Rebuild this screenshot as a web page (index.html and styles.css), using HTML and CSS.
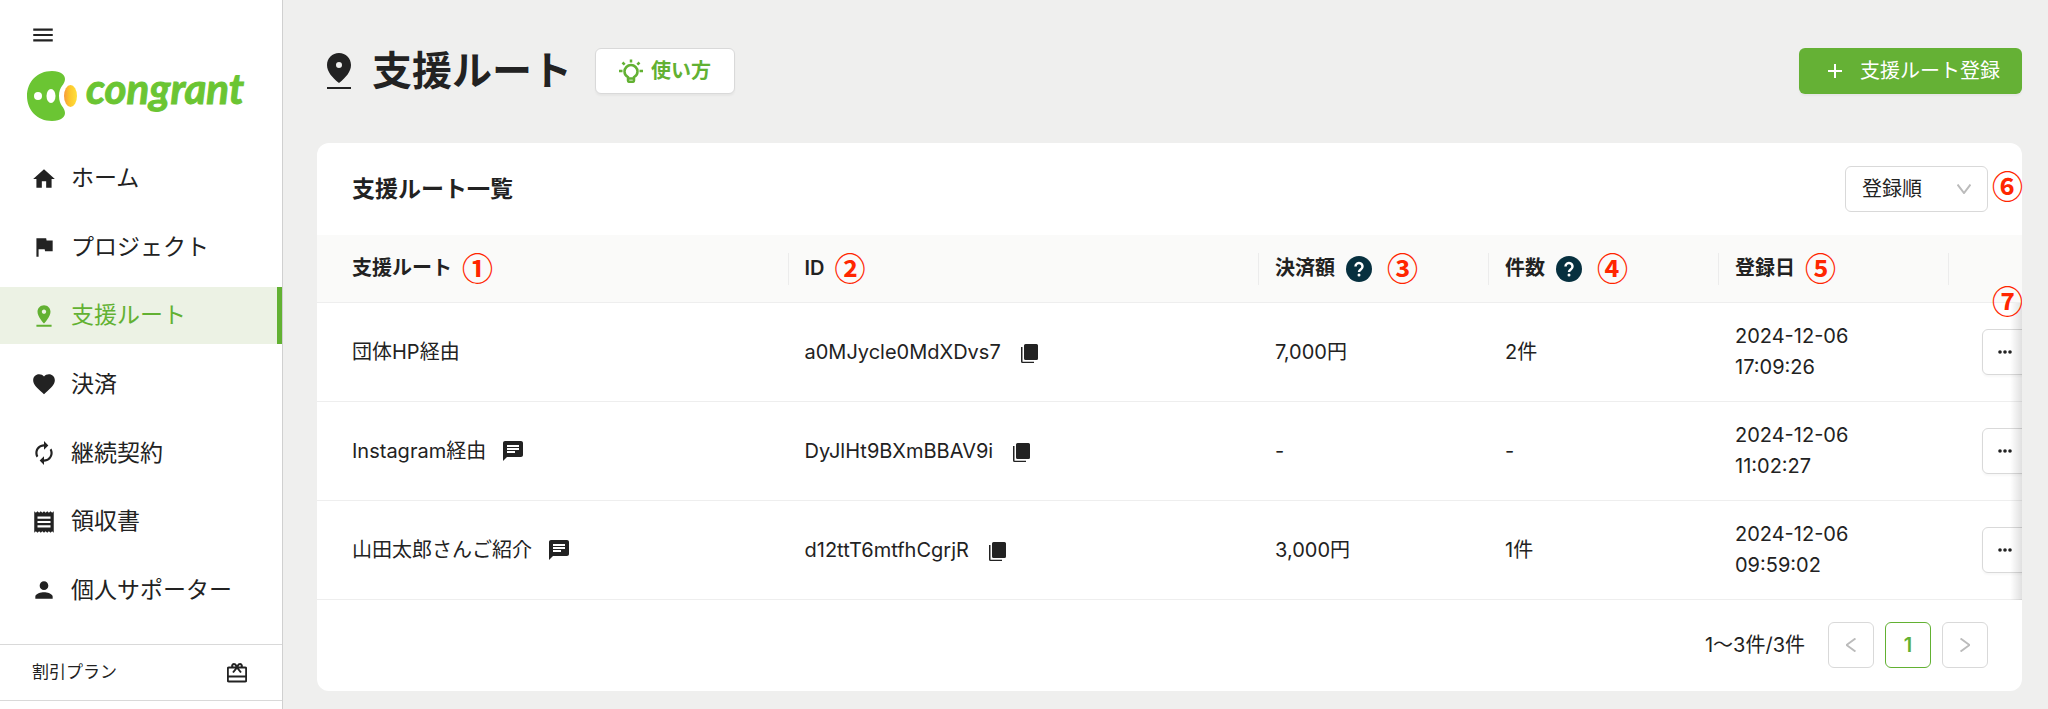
FILE: index.html
```html
<!DOCTYPE html>
<html lang="ja">
<head>
    <meta charset="UTF-8">
    <meta name="viewport" content="width=device-width, initial-scale=1.0">
    <title>支援ルート | congrant</title>
    <link rel="stylesheet" href="styles.css">
</head>
<body>
    <div class="layout">
        <aside class="sidebar">
            <button type="button" class="menu-btn" aria-label="メニュー">
                <svg class="icon" viewBox="0 0 24 24"><path d="M3 18h18v-2H3v2zm0-5h18v-2H3v2zm0-7v2h18V6H3z"/></svg>
            </button>
            <a href="#" class="logo">
                <svg class="logo-mark" viewBox="0 0 50 50">
                    <defs>
                        <linearGradient id="coin">
                            <stop offset="0" stop-color="#f79a3c"/>
                            <stop offset="0.4" stop-color="#fcc42c"/>
                            <stop offset="1" stop-color="#ffe03a"/>
                        </linearGradient>
                    </defs>
                    <path fill="#6bc533" d="M25 0C34 0 38 4 38 8C38 14 32 15 32 25C32 35 38 36 38 42C38 46 34 50 25 50C10 50 0 39 0 25C0 11 10 0 25 0Z"/>
                    <circle cx="11" cy="25" r="4" fill="#fff"/>
                    <ellipse cx="24" cy="25" rx="4.500" ry="7" fill="#fff"/>
                    <ellipse cx="43.500" cy="25" rx="6.500" ry="11" fill="url(#coin)"/>
                </svg>
                <span class="logo-text">congrant</span>
            </a>

            <nav class="nav">
                <a href="#" class="nav-item">
                    <svg class="icon" viewBox="0 0 24 24"><path d="M10 20v-6h4v6h5v-8h3L12 3 2 12h3v8z"/></svg>
                    ホーム
                </a>
                <a href="#" class="nav-item">
                    <svg class="icon" viewBox="0 0 24 24"><path d="M14.400 6L14 4H5v17h2v-7h5.600l.4 2h7V6z"/></svg>
                    プロジェクト
                </a>
                <a href="#" class="nav-item active">
                    <svg class="icon" viewBox="0 0 24 24"><path d="M18 8c0-3.310-2.690-6-6-6S6 4.690 6 8c0 4.500 6 11 6 11s6-6.500 6-11zm-8 0c0-1.100.9-2 2-2s2 .9 2 2-.89 2-2 2c-1.100 0-2-.9-2-2zM5 20v2h14v-2H5z"/></svg>
                    支援ルート
                </a>
                <a href="#" class="nav-item">
                    <svg class="icon" viewBox="0 0 24 24"><path d="M12 21.350l-1.450-1.320C5.400 15.360 2 12.280 2 8.500 2 5.420 4.420 3 7.500 3c1.740 0 3.410.81 4.500 2.090C13.090 3.810 14.760 3 16.500 3 19.580 3 22 5.420 22 8.500c0 3.780-3.400 6.860-8.550 11.540L12 21.350z"/></svg>
                    決済
                </a>
                <a href="#" class="nav-item">
                    <svg class="icon" viewBox="0 0 24 24"><path d="M12 6v3l4-4-4-4v3c-4.420 0-8 3.580-8 8 0 1.570.46 3.030 1.240 4.260L6.700 14.800c-.45-.83-.7-1.790-.7-2.800 0-3.310 2.690-6 6-6zm6.760 1.740L17.300 9.200c.44.840.7 1.790.7 2.800 0 3.310-2.690 6-6 6v-3l-4 4 4 4v-3c4.420 0 8-3.580 8-8 0-1.570-.46-3.030-1.240-4.260z"/></svg>
                    継続契約
                </a>
                <a href="#" class="nav-item">
                    <svg class="icon" viewBox="0 0 24 24"><path d="M18 17H6v-2h12v2zm0-4H6v-2h12v2zm0-4H6V7h12v2zM3 22l1.500-1.500L6 22l1.500-1.500L9 22l1.500-1.500L12 22l1.500-1.500L15 22l1.500-1.500L18 22l1.500-1.500L21 22V2l-1.500 1.500L18 2l-1.500 1.500L15 2l-1.500 1.500L12 2l-1.500 1.500L9 2 7.500 3.500 6 2 4.500 3.500 3 2v20z"/></svg>
                    領収書
                </a>
                <a href="#" class="nav-item">
                    <svg class="icon" viewBox="0 0 24 24"><path d="M12 12c2.210 0 4-1.790 4-4s-1.790-4-4-4-4 1.790-4 4 1.790 4 4 4zm0 2c-2.670 0-8 1.340-8 4v2h16v-2c0-2.660-5.330-4-8-4z"/></svg>
                    個人サポーター
                </a>
            </nav>

            <a href="#" class="plan-link">
                割引プラン
                <svg class="plan-icon" viewBox="0 0 20 20"><path d="M2 4.500h16q1.200 0 1.200 1.200v11.600q0 1.200-1.200 1.200H2q-1.200 0-1.200-1.200V5.700Q.800 4.500 2 4.500zM1 13.500h18M10 4.500L6 9.500M10 4.500l4 5M10 4.500C9 2 8.500 1 7.200 1a1.900 1.900 0 0 0-1.400 3.300M10 4.500C11 2 11.500 1 12.800 1a1.900 1.900 0 0 1 1.400 3.300"/></svg>
            </a>
        </aside>

        <main class="main">
            <header class="page-header">
                <svg class="title-icon" viewBox="0 0 24 36"><path d="M12 0C5.200 0 0 5 0 12c0 6.500 5 12.500 12 18 7-5.500 12-11.500 12-18C24 5 18.800 0 12 0zm0 9a3 3 0 1 1 0 6 3 3 0 0 1 0-6zM0 34h24v2H0z"/></svg>
                <h1>支援ルート</h1>
                <button type="button" class="btn help-btn">
                    <svg class="bulb-icon" viewBox="0 0 24 24">
                        <path d="M9 18.200c-2.200-1-3.500-3.100-3.500-5.600a6.500 6.500 0 0 1 13 0c0 2.500-1.300 4.600-3.500 5.600v3.300q0 1.300-1.300 1.300h-3.400Q9 22.800 9 21.500zM9 19.500h6M12 .5v3M0 12h3.500M20.500 12H24M3.500 3.500l2.200 2.200M20.500 3.500l-2.200 2.200"/>
                    </svg>
                    使い方
                </button>
                <button type="button" class="btn add-btn">
                    <svg class="plus-icon" viewBox="0 0 14 14"><path d="M7 0v14M0 7h14"/></svg>
                    支援ルート登録
                </button>
            </header>

            <section class="card">
                <div class="card-header">
                    <h2>支援ルート一覧</h2>
                    <div class="sort">
                        <select class="sort-select" aria-label="並び順">
                            <option>登録順</option>
                        </select>
                        <svg class="sort-arrow" viewBox="0 0 14 10"><path d="M.5.500L7 9 13.500.500"/></svg>
                        <span class="mark mark-sort">⑥</span>
                    </div>
                </div>

                <div class="table-wrap">
                    <table class="route-table">
                        <colgroup>
                            <col>
                            <col>
                            <col class="col-data">
                            <col class="col-data">
                            <col class="col-data">
                            <col class="col-action">
                        </colgroup>
                        <thead>
                            <tr>
                                <th><div class="th-cell">支援ルート<span class="mark">①</span></div></th>
                                <th><div class="th-cell">ID<span class="mark">②</span></div></th>
                                <th><div class="th-cell">決済額<button type="button" class="tip" aria-label="決済額の説明"><svg viewBox="0 0 26 26"><path d="M9.500 10.500a3.500 3.500 0 1 1 5.500 2.800c-1.300 1-2 1.400-2 2.700"/><circle cx="13" cy="19" r="1.500"/></svg></button><span class="mark">③</span></div></th>
                                <th><div class="th-cell">件数<button type="button" class="tip" aria-label="件数の説明"><svg viewBox="0 0 26 26"><path d="M9.500 10.500a3.500 3.500 0 1 1 5.500 2.800c-1.300 1-2 1.400-2 2.700"/><circle cx="13" cy="19" r="1.500"/></svg></button><span class="mark">④</span></div></th>
                                <th><div class="th-cell">登録日<span class="mark">⑤</span></div></th>
                                <th><span class="mark mark-action">⑦</span></th>
                            </tr>
                        </thead>
                        <tbody>
                            <tr>
                                <td>団体HP経由</td>
                                <td>
                                    <div class="id-cell">a0MJycle0MdXDvs7
                                        <button type="button" class="icon-btn" aria-label="コピー"><svg class="copy-icon" viewBox="0 0 17 20"><path d="M4.500 0h11Q17 0 17 1.500v13Q17 16 15.500 16h-11Q3 16 3 14.500v-13Q3 0 4.500 0zM0 3h1.500v14.800H13V19H1.500Q0 19 0 17.500z"/></svg></button>
                                    </div>
                                </td>
                                <td>7,000円</td>
                                <td>2件</td>
                                <td>2024-12-06<br>17:09:26</td>
                                <td><button type="button" class="more-btn" aria-label="操作"><svg viewBox="0 0 14 4"><circle cx="2" cy="2" r="1.800"/><circle cx="7" cy="2" r="1.800"/><circle cx="12" cy="2" r="1.800"/></svg></button></td>
                            </tr>
                            <tr>
                                <td>
                                    <div class="name-cell">Instagram経由
                                        <button type="button" class="icon-btn" aria-label="メモ"><svg class="memo-icon" viewBox="2 2 20 20"><path d="M20 2H4c-1.100 0-1.990.9-1.990 2L2 22l4-4h14c1.100 0 2-.9 2-2V4c0-1.100-.9-2-2-2zM6 9h12v2H6V9zm8 5H6v-2h8v2zm4-6H6V6h12v2z"/></svg></button>
                                    </div>
                                </td>
                                <td>
                                    <div class="id-cell">DyJlHt9BXmBBAV9i
                                        <button type="button" class="icon-btn" aria-label="コピー"><svg class="copy-icon" viewBox="0 0 17 20"><path d="M4.500 0h11Q17 0 17 1.500v13Q17 16 15.500 16h-11Q3 16 3 14.500v-13Q3 0 4.500 0zM0 3h1.500v14.800H13V19H1.500Q0 19 0 17.500z"/></svg></button>
                                    </div>
                                </td>
                                <td>-</td>
                                <td>-</td>
                                <td>2024-12-06<br>11:02:27</td>
                                <td><button type="button" class="more-btn" aria-label="操作"><svg viewBox="0 0 14 4"><circle cx="2" cy="2" r="1.800"/><circle cx="7" cy="2" r="1.800"/><circle cx="12" cy="2" r="1.800"/></svg></button></td>
                            </tr>
                            <tr>
                                <td>
                                    <div class="name-cell">山田太郎さんご紹介
                                        <button type="button" class="icon-btn" aria-label="メモ"><svg class="memo-icon" viewBox="2 2 20 20"><path d="M20 2H4c-1.100 0-1.990.9-1.990 2L2 22l4-4h14c1.100 0 2-.9 2-2V4c0-1.100-.9-2-2-2zM6 9h12v2H6V9zm8 5H6v-2h8v2zm4-6H6V6h12v2z"/></svg></button>
                                    </div>
                                </td>
                                <td>
                                    <div class="id-cell">d12ttT6mtfhCgrjR
                                        <button type="button" class="icon-btn" aria-label="コピー"><svg class="copy-icon" viewBox="0 0 17 20"><path d="M4.500 0h11Q17 0 17 1.500v13Q17 16 15.500 16h-11Q3 16 3 14.500v-13Q3 0 4.500 0zM0 3h1.500v14.800H13V19H1.500Q0 19 0 17.500z"/></svg></button>
                                    </div>
                                </td>
                                <td>3,000円</td>
                                <td>1件</td>
                                <td>2024-12-06<br>09:59:02</td>
                                <td><button type="button" class="more-btn" aria-label="操作"><svg viewBox="0 0 14 4"><circle cx="2" cy="2" r="1.800"/><circle cx="7" cy="2" r="1.800"/><circle cx="12" cy="2" r="1.800"/></svg></button></td>
                            </tr>
                        </tbody>
                    </table>
                </div>

                <div class="pagination">
                    <span class="total">1〜3件/3件</span>
                    <button type="button" class="page-btn" aria-label="前へ" disabled><svg viewBox="0 0 10 14"><path d="M9.500.500L.500 7l9 6.500"/></svg></button>
                    <button type="button" class="page-btn current">1</button>
                    <button type="button" class="page-btn" aria-label="次へ" disabled><svg viewBox="0 0 10 14"><path d="M.500.500l9 6.500-9 6.500"/></svg></button>
                </div>
            </section>
        </main>
    </div>
</body>
</html>
```
FILE: styles.css
```css
* {
    box-sizing: border-box;
}

body {
    margin: 0;
    font-family: Inter, "Noto Sans CJK JP", sans-serif;
    font-size: 20px;
    line-height: 31px;
    color: #222;
    background: #efefee;
}

button,
select {
    font: inherit;
    color: inherit;
    margin: 0;
    padding: 0;
    cursor: pointer;
}

a {
    color: inherit;
    text-decoration: none;
}

svg {
    display: block;
    flex-shrink: 0;
    fill: currentColor;
}

.layout {
    display: flex;
    min-height: 100vh;
}

/* sidebar */
.sidebar {
    width: 283px;
    flex-shrink: 0;
    display: flex;
    flex-direction: column;
    padding: 22px 0 8px;
    background: #fff;
    border-right: 1px solid #d0d0d0;
}

.icon {
    width: 26px;
    height: 26px;
}

.menu-btn {
    align-self: flex-start;
    margin-left: 30px;
    border: none;
    background: none;
}

.logo {
    display: flex;
    align-items: center;
    gap: 9px;
    height: 50px;
    margin: 23px 0 29px 27px;
}

.logo-mark {
    width: 50px;
    height: 50px;
}

.logo-text {
    font-family: Lato, sans-serif;
    font-size: 42px;
    font-weight: 700;
    font-style: italic;
    line-height: 36px;
    padding-bottom: 16px;
    color: #6bc533;
    -webkit-text-stroke: 1px #6bc533;
}

.nav {
    flex: 1;
    display: flex;
    flex-direction: column;
    justify-content: space-between;
    padding-bottom: 25px;
}

.nav-item {
    display: flex;
    align-items: center;
    gap: 14px;
    height: 57px;
    padding-left: 31px;
    font-size: 23px;
    border-right: 5px solid transparent;
}

.nav-item.active {
    color: #62b132;
    background: #ecf2e4;
    border-right-color: #62b132;
}

.plan-link {
    display: flex;
    align-items: center;
    justify-content: space-between;
    height: 57px;
    padding: 0 35px 0 32px;
    font-size: 17px;
    border-top: 1px solid #d9d9d9;
    border-bottom: 1px solid #d9d9d9;
}

.plan-icon {
    width: 20px;
    height: 20px;
    fill: none;
    stroke: currentColor;
    stroke-width: 2;
}

/* main */
.main {
    flex: 1;
    min-width: 0;
    padding: 48px 26px 18px 34px;
}

.page-header {
    display: flex;
    align-items: center;
    margin-bottom: 49px;
    padding-left: 10px;
}

.title-icon {
    width: 24px;
    height: 36px;
    margin-right: 21px;
}

h1 {
    margin: 0 23px 0 0;
    font-size: 40px;
    line-height: 46px;
}

.btn {
    display: flex;
    align-items: center;
    height: 46px;
    border-radius: 6px;
    box-shadow: 0 2px 2px rgba(0, 0, 0, 0.04);
}

.help-btn {
    gap: 8px;
    padding: 0 23px;
    font-weight: 600;
    color: #62b132;
    background: #fff;
    border: 1px solid #d9d9d9;
}

.bulb-icon {
    width: 24px;
    height: 24px;
    fill: none;
    stroke: currentColor;
    stroke-width: 2.5;
}

.add-btn {
    gap: 18px;
    margin-left: auto;
    padding: 0 22px 0 29px;
    color: #fff;
    background: #65b135;
    border: none;
}

.plus-icon {
    width: 14px;
    height: 14px;
    stroke: currentColor;
    stroke-width: 2;
}

.card {
    background: #fff;
    border-radius: 12px;
}

.card-header {
    display: flex;
    align-items: center;
    justify-content: space-between;
    height: 92px;
    padding: 0 34px 0 35px;
}

h2 {
    margin: 0;
    font-size: 23px;
    line-height: 32px;
}

.sort {
    position: relative;
}

.sort-select {
    display: block;
    width: 143px;
    height: 46px;
    padding: 0 16px;
    appearance: none;
    background: #fff;
    border: 1px solid #d9d9d9;
    border-radius: 6px;
}

.sort-arrow {
    position: absolute;
    top: 18px;
    right: 17px;
    width: 14px;
    height: 10px;
    fill: none;
    stroke: #bbb;
    stroke-width: 2;
    pointer-events: none;
}

/* numbered callouts */
.mark {
    font-family: "Noto Sans CJK JP", sans-serif;
    font-size: 31px;
    font-weight: 700;
    line-height: 31px;
    padding-bottom: 4px;
    color: #ff2600;
}

.mark-sort {
    position: absolute;
    top: 3px;
    left: 147px;
}

.mark-action {
    position: absolute;
    top: 49px;
    right: -1px;
    z-index: 1;
}

/* table */
.table-wrap {
    position: relative;
    overflow: hidden;
}

/* scroll shadow on the clipped edge */
.table-wrap::after {
    content: "";
    position: absolute;
    top: 68px;
    right: 0;
    bottom: 0;
    width: 12px;
    background: linear-gradient(to right, rgba(0, 0, 0, 0), rgba(0, 0, 0, 0.12));
    pointer-events: none;
}

.route-table {
    width: 100%;
    table-layout: fixed;
    border-collapse: separate;
    border-spacing: 0;
}

.col-data {
    width: 230px;
}

.col-action {
    width: 74px;
}

th,
td {
    padding: 18px 17px;
    text-align: left;
    border-bottom: 1px solid #eee;
}

th {
    position: relative;
    height: 68px;
    padding-top: 0;
    padding-bottom: 0;
    font-weight: 600;
    background: #fafaf9;
}

th:not(:first-child)::before {
    content: "";
    position: absolute;
    top: 18px;
    left: 0;
    width: 1px;
    height: 32px;
    background: #ececec;
}

th:first-child,
td:first-child {
    padding-left: 35px;
}

td:last-child {
    padding: 0 0 0 34px;
}

.th-cell {
    display: flex;
    align-items: center;
    gap: 10px;
}

.name-cell,
.id-cell {
    display: flex;
    align-items: center;
    gap: 17px;
}

.id-cell {
    gap: 20px;
}

.tip {
    width: 26px;
    height: 26px;
    margin-left: 1px;
    margin-right: 5px;
    color: #fff;
    background: #07303f;
    border: none;
    border-radius: 50%;
}

.tip path {
    fill: none;
    stroke: currentColor;
    stroke-width: 2.5;
}

.icon-btn {
    border: none;
    background: none;
}

.memo-icon {
    width: 20px;
    height: 20px;
}

.copy-icon {
    width: 17px;
    height: 20px;
    margin-top: 3px;
}

.more-btn,
.page-btn {
    display: flex;
    align-items: center;
    justify-content: center;
    width: 46px;
    height: 46px;
    background: #fff;
    border: 1px solid #d9d9d9;
    border-radius: 6px;
}

.more-btn {
    box-shadow: 0 2px 2px rgba(0, 0, 0, 0.03);
}

.more-btn svg {
    width: 14px;
    height: 4px;
}

.pagination {
    display: flex;
    align-items: center;
    justify-content: flex-end;
    gap: 11px;
    padding: 22px 34px 23px;
}

.total {
    margin-right: 12px;
}

.page-btn svg {
    width: 10px;
    height: 14px;
    fill: none;
    stroke: #bbb;
    stroke-width: 2;
}

.page-btn.current {
    font-weight: 600;
    color: #62b132;
    border: 1px solid #62b132;
}
```
